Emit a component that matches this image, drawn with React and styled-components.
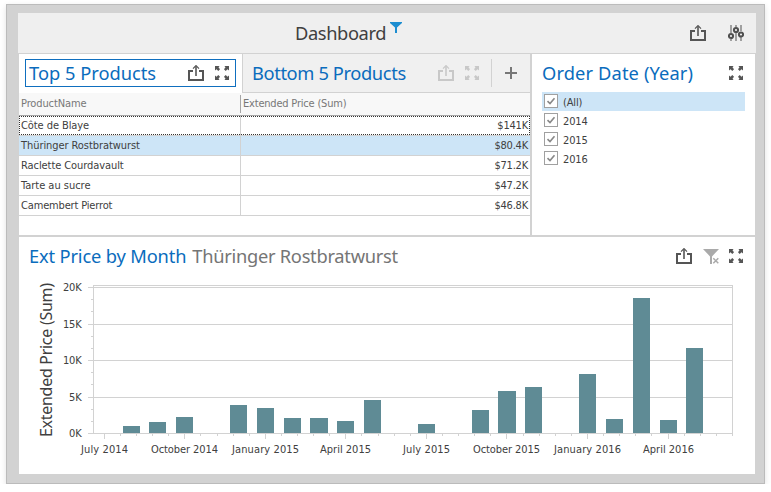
import React from "react";
import styled, { createGlobalStyle } from "styled-components";

const FONT = '"DejaVu Sans Condensed", "DejaVu Sans", sans-serif';
const TITLE_FONT = '"Noto Sans", "Open Sans", sans-serif';
const LINE = "#d2d2d2";

const GlobalStyle = createGlobalStyle`
  *, *::before, *::after { box-sizing: border-box; }
  body {
    margin: 0;
    background: #fff;
    color: #404040;
    font: 11px ${FONT};
    overflow: hidden;
  }
`;

const Frame = styled.main`
  width: 759px;
  height: 480px;
  margin: 4px 0 0 6px;
  padding: 8px 8px 9px 11px;
  border: 1px solid #bbb;
  background: ${LINE};
  box-shadow: 0 2px 6px rgba(0, 0, 0, 0.12);
`;

const Header = styled.header`
  display: flex;
  justify-content: flex-end;
  align-items: center;
  gap: 22px;
  height: 40px;
  padding: 0 12px 0 0;
  background: #efefef;
`;

const Caption = styled.div`
  display: flex;
  flex: 1;
  justify-content: flex-start;
  padding-left: 277px;
  gap: 4px;
`;

const Title = styled.h2`
  margin: 0;
  font-family: ${TITLE_FONT};
  font-size: 18.3px;
  font-weight: 400;
  line-height: 24px;
  white-space: nowrap;
  letter-spacing: ${(p) => p.$spacing || 0}px;
  color: ${(p) => p.$color || "#0a6cbd"};
`;

const Body = styled.div`
  display: grid;
  grid-template-columns: 511px 223px;
  grid-template-rows: 181px 237px;
  gap: 2px;
  width: 736px;
  margin: 1px 0 0 1px;
`;

const Panel = styled.section`
  background: #fff;
  min-width: 0;
  grid-column: ${(p) => (p.$wide ? "1 / -1" : "auto")};
`;

const Tabs = styled.div`
  display: flex;
  height: 39px;
`;

const ActiveTab = styled.div`
  width: 223px;
  padding: 5px 6px;
`;

const FocusBox = styled.div`
  display: flex;
  align-items: center;
  width: 211px;
  height: 28px;
  padding: 0 6px 0 3px;
  border: 1px solid #0f6fbf;
`;

const InactiveTab = styled.div`
  display: flex;
  align-items: center;
  flex: 1;
  padding: 0 13px 0 9px;
  background: #f0f0f0;
  border-left: 1px solid ${LINE};
  border-bottom: 1px solid ${LINE};
`;

const Divider = styled.span`
  width: 1px;
  height: 28px;
  margin: 0 13px 0 12px;
  background: ${LINE};
`;

const Tools = styled.div`
  display: flex;
  align-items: center;
  gap: ${(p) => p.$gap || 11}px;
  margin-left: auto;
`;

const Grid = styled.div`
  display: flex;
  flex-direction: column;
`;

const GridHeader = styled.div`
  display: flex;
  height: 23px;
  background: #f8f8f8;
  border-bottom: 1px solid #a6a6a6;
  color: #777;
`;

const ColumnTitle = styled.div`
  width: ${(p) => (p.$first ? "222px" : "289px")};
  height: 18px;
  margin-top: 2px;
  padding-left: 2px;
  border-right: ${(p) => (p.$first ? "1px solid #a6a6a6" : "0")};
  line-height: 18px;
  letter-spacing: ${(p) => p.$spacing}px;
`;

const GridRow = styled.div`
  display: flex;
  height: 19px;
  margin-bottom: 1px;
  box-shadow: 0 1px 0 ${LINE};
  background: ${(p) => (p.$selected ? "#cde5f7" : "#fff")};
  outline: ${(p) => (p.$focused ? "1px dotted #333" : "none")};
  outline-offset: -1px;
`;

const Cell = styled.div`
  width: ${(p) => (p.$value ? "289px" : "222px")};
  padding: 0 2px;
  text-align: ${(p) => (p.$value ? "right" : "left")};
  border-right: ${(p) => (p.$value ? "0" : `1px solid ${LINE}`)};
  line-height: 20px;
  letter-spacing: ${(p) => p.$spacing}px;
`;

const PanelHead = styled.div`
  display: flex;
  align-items: center;
  height: 38px;
  padding: 0 12px 0 10px;
  gap: 6px;
`;

const Options = styled.div`
  width: 203px;
  margin-left: 10px;
`;

const Option = styled.label`
  display: flex;
  align-items: center;
  gap: 5px;
  height: 19px;
  padding-left: 2px;
  line-height: 21px;
  letter-spacing: -0.15px;
  background: ${(p) => (p.$selected ? "#cde5f7" : "transparent")};
`;

const OptionText = styled.span`
  padding-top: 1px;
`;

const CheckBox = styled.span`
  display: grid;
  place-items: center;
  width: 14px;
  height: 14px;
  margin-bottom: 1px;
  border: 1px solid #a0a0a0;
  background: #fff;
`;

const ChartSvg = styled.svg`
  display: block;
  margin-top: 2px;
  font: 11px ${FONT};
`;

const AxisTitle = styled.text`
  font: 16px ${TITLE_FONT};
`;

const ExportIcon = ({ color = "#555" }) => (
  <svg width="16" height="16" viewBox="0 0 16 16" fill="none">
    <path d="M5 6H1v9h14V6h-4" stroke={color} strokeWidth="2" />
    <path d="M8 11V1.2" stroke={color} strokeWidth="1.6" />
    <path d="M5 3.7 8 .6l3 3.1" stroke={color} strokeWidth="1.2" />
  </svg>
);

const CORNER = "M0 0H4.6L3.5 1.3L5 3.3L3.3 5L1.5 3.3L0 4.6Z";
const MaximizeIcon = ({ color = "#555" }) => (
  <svg width="14" height="14" viewBox="0 0 14 14" fill={color}>
    <path d={CORNER} />
    <path d={CORNER} transform="translate(14 0) scale(-1 1)" />
    <path d={CORNER} transform="translate(0 14) scale(1 -1)" />
    <path d={CORNER} transform="translate(14 14) scale(-1 -1)" />
  </svg>
);

const FilterIcon = () => (
  <svg width="12" height="12" viewBox="0 0 12 12" fill="#1c8dd0">
    <path d="M0 1h12v1L7 6.6V12H5V6.6L0 2z" />
  </svg>
);

const ClearFilterIcon = () => (
  <svg width="16" height="16" viewBox="0 0 16 16">
    <path d="M0 1h16L9 8.4V16H7V8.4z" fill="#aaa" />
    <path d="M10.3 10.3l5 5m0-5l-5 5" stroke="#aaa" strokeWidth="1.5" />
  </svg>
);

const ParametersIcon = () => (
  <svg width="16" height="16" viewBox="0 0 16 16" fill="none">
    <path d="M3 0v8M3 14v2M8 0v2M8 8v8M13 0v6M13 12v4" stroke="#a0a0a0" strokeWidth="2" />
    <g stroke="#505050" strokeWidth="2">
      <circle cx="3" cy="11" r="2.1" />
      <circle cx="8" cy="5" r="2.1" />
      <circle cx="13" cy="9.5" r="2.1" />
    </g>
  </svg>
);

const PlusIcon = () => (
  <svg width="12" height="12" viewBox="0 0 12 12">
    <path d="M6 0v12M0 6h12" stroke="#777" strokeWidth="2" />
  </svg>
);

const CheckIcon = () => (
  <svg width="10" height="10" viewBox="0 0 10 10" fill="none">
    <path d="M1.5 5.2 4 7.6 8.5 2.2" stroke="#888" strokeWidth="1.6" />
  </svg>
);

const PRODUCTS = [
  { name: "Côte de Blaye", price: "$141K", spacing: -0.08, focused: true },
  { name: "Thüringer Rostbratwurst", price: "$80.4K", spacing: -0.07, selected: true },
  { name: "Raclette Courdavault", price: "$71.2K", spacing: -0.08 },
  { name: "Tarte au sucre", price: "$47.2K", spacing: -0.02 },
  { name: "Camembert Pierrot", price: "$46.8K", spacing: -0.16 },
];

// Bars: left edge, top edge and width inside the chart area.
const BARS = [
  [104, 149], [130, 145], [157, 140], [211, 128], [238, 131], [265, 141],
  [291, 141, 18], [318, 144], [345, 123], [399, 147], [453, 133], [479, 114, 18],
  [506, 110], [560, 97], [587, 142], [614, 21], [641, 143], [667, 71],
];
const Y_LABELS = [["20K", 10], ["15K", 47], ["10K", 83], ["5K", 120], ["0K", 156]];
const Y_MINOR = [22, 34, 59, 71, 95, 107, 132, 144];
const X_LABELS = [
  ["July 2014", 85, 47], ["October 2014", 165, 67], ["January 2015", 246, 67],
  ["April 2015", 326, 51], ["July 2015", 407, 47], ["October 2015", 487, 67],
  ["January 2016", 568, 67], ["April 2016", 649, 51],
];
const X_MINOR = [
  101, 117, 133, 149, 181, 198, 214, 230, 262, 278, 294, 310, 342, 359, 375, 391,
  423, 439, 455, 471, 504, 520, 536, 552, 584, 600, 616, 632, 665, 681, 697, 713,
];

const Chart = () => (
  <ChartSvg width="736" height="196" viewBox="0 0 736 196">
    <g fill={LINE} shapeRendering="crispEdges">
      <rect x="74" y="8" width="640" height="1" />
      <rect x="74" y="8" width="1" height="149" />
      <rect x="713" y="8" width="1" height="149" />
      {Y_LABELS.map(([t, y]) => <rect key={t} x="69" y={y} width="645" height="1" />)}
      {Y_MINOR.map((y) => <rect key={y} x="72" y={y} width="2" height="1" />)}
      {X_LABELS.map(([t, x]) => <rect key={t} x={x} y="157" width="1" height="5" />)}
      {X_MINOR.map((x) => <rect key={x} x={x} y="157" width="1" height="2" />)}
    </g>
    <g fill="#5f8b95" shapeRendering="crispEdges">
      {BARS.map(([x, y, w = 17]) => <rect key={x} x={x} y={y} width={w} height={156 - y} />)}
    </g>
    <g fill="#404040">
      {Y_LABELS.map(([t, y]) => (
        <text key={t} x="62.5" y={y + 4} textAnchor="end" letterSpacing="-0.2">{t}</text>
      ))}
      {X_LABELS.map(([t, x, w]) => (
        <text key={t} x={x + 0.5} y="176" textAnchor="middle" textLength={w}>{t}</text>
      ))}
      <AxisTitle transform="translate(33 160) rotate(-90)" textLength="154">
        Extended Price (Sum)
      </AxisTitle>
    </g>
  </ChartSvg>
);

export default function App() {
  return (
    <>
      <GlobalStyle />
      <Frame>
        <Header>
          <Caption>
            <Title $color="#404040" $spacing={-0.4}>Dashboard</Title>
            <FilterIcon />
          </Caption>
          <ExportIcon />
          <ParametersIcon />
        </Header>
        <Body>
          <Panel>
            <Tabs>
              <ActiveTab>
                <FocusBox>
                  <Title>Top 5 Products</Title>
                  <Tools><ExportIcon /><MaximizeIcon /></Tools>
                </FocusBox>
              </ActiveTab>
              <InactiveTab>
                <Title $spacing={-0.38}>Bottom 5 Products</Title>
                <Tools><ExportIcon color="#c8c8c8" /><MaximizeIcon color="#c8c8c8" /></Tools>
                <Divider />
                <PlusIcon />
              </InactiveTab>
            </Tabs>
            <Grid>
              <GridHeader>
                <ColumnTitle $first $spacing={-0.12}>ProductName</ColumnTitle>
                <ColumnTitle $spacing={-0.2}>Extended Price (Sum)</ColumnTitle>
              </GridHeader>
              {PRODUCTS.map((p) => (
                <GridRow key={p.name} $selected={p.selected} $focused={p.focused}>
                  <Cell $spacing={p.spacing}>{p.name}</Cell>
                  <Cell $value $spacing={-0.2}>{p.price}</Cell>
                </GridRow>
              ))}
            </Grid>
          </Panel>
          <Panel>
            <PanelHead>
              <Title $spacing={0.12}>Order Date (Year)</Title>
              <Tools><MaximizeIcon /></Tools>
            </PanelHead>
            <Options>
              {["(All)", "2014", "2015", "2016"].map((label, i) => (
                <Option key={label} $selected={i === 0}>
                  <CheckBox><CheckIcon /></CheckBox>
                  <OptionText>{label}</OptionText>
                </Option>
              ))}
            </Options>
          </Panel>
          <Panel $wide>
            <PanelHead>
              <Title $spacing={-0.16}>Ext Price by Month</Title>
              <Title $color="#757575" $spacing={-0.27}>Thüringer Rostbratwurst</Title>
              <Tools $gap={10.5}><ExportIcon /><ClearFilterIcon /><MaximizeIcon /></Tools>
            </PanelHead>
            <Chart />
          </Panel>
        </Body>
      </Frame>
    </>
  );
}
